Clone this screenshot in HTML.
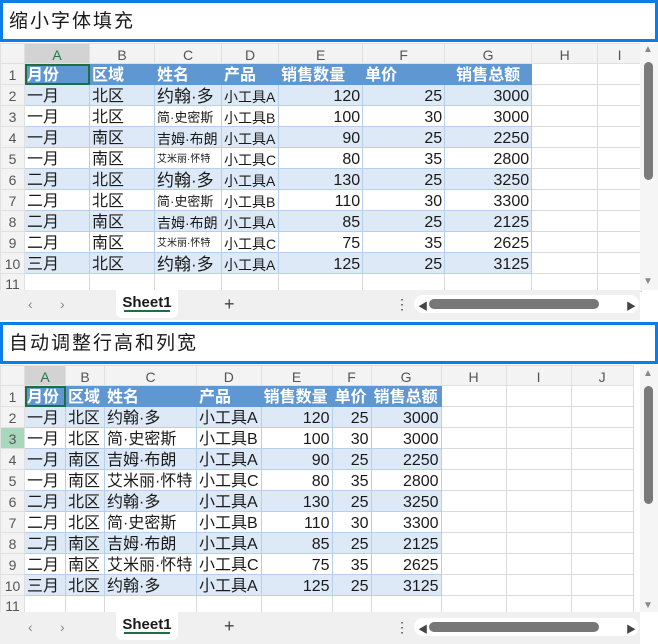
<!DOCTYPE html>
<html><head><meta charset="utf-8"><style>
*{box-sizing:border-box;margin:0;padding:0}
body{width:658px;height:644px;background:#fff;position:relative;overflow:hidden;font-family:"Liberation Sans","Noto Sans CJK SC",sans-serif;color:#1a1a1a}
.title{position:absolute;left:0;width:658px;height:42px;border:3px solid #0b7de6;font-size:19px;padding-left:6px;line-height:38px;letter-spacing:2px}
table{position:absolute;left:0;border-collapse:collapse;table-layout:fixed}
td{border:1px solid #dadada;white-space:nowrap;overflow:hidden;padding:3px 2px 0 2px;font-size:16px;line-height:1;vertical-align:middle}
tr.hd td{background:#f3f3f3;text-align:center;color:#555;font-size:14px;border-color:#e0e0e0}
td.rn{background:#f3f3f3;text-align:center;color:#555;font-size:14px;border-color:#e0e0e0;padding:2px 0 0 0}
tr.hd td.sel{background:#d3d3d3;color:#1f7a45}
tr.h1 td.d{background:#5f97d3;color:#fff;font-weight:bold;border-color:#5f97d3}
tr.b td.d{background:#dde9f6;border-color:#b6cfea}
tr.w td.d{background:#fff;border-color:#b6cfea}
td.r{text-align:right}
td.act{outline:2px solid #1e6e42;outline-offset:-2px}
.tabbar{position:absolute;left:0;width:640px;background:#f0f0f0}
.sheet{position:absolute;background:#fff;border-radius:0 0 6px 6px;font-weight:bold;font-size:15px;text-align:center}
.sheet i{position:absolute;left:8px;right:8px;bottom:6px;height:2px;background:#1e6e42}
.vs{position:absolute;left:640px;width:18px;background:#f5f5f5}
.thumb{position:absolute;left:644px;width:9px;background:#7a7a7a;border-radius:5px}
.hs{position:absolute;left:414px;width:225px;height:18px;background:#fff;border-radius:9px}
.hs b{position:absolute;left:15px;top:4px;width:170px;height:10px;background:#777;border-radius:5px}
.g{position:absolute;color:#888;font-size:14px}
</style></head><body>

<div class="title" style="top:0">缩小字体填充</div>

<table style="top:43px">
<colgroup><col style="width:24px"><col style="width:65px"><col style="width:65px"><col style="width:67px"><col style="width:55px"><col style="width:84px"><col style="width:82px"><col style="width:87px"><col style="width:66px"><col style="width:44px"></colgroup>
<tr class="hd" style="height:20px"><td></td><td class="sel">A</td><td>B</td><td>C</td><td>D</td><td>E</td><td>F</td><td>G</td><td>H</td><td>I</td></tr>
<tr class="h1" style="height:21px"><td class="rn">1</td><td class="d act">月份</td><td class="d">区域</td><td class="d">姓名</td><td class="d">产品</td><td class="d">销售数量</td><td class="d">单价</td><td class="d" style="text-align:center">销售总额</td><td></td><td></td></tr>
<tr class="b" style="height:21px"><td class="rn">2</td><td class="d">一月</td><td class="d">北区</td><td class="d" style="font-size:17px">约翰·多</td><td class="d" style="font-size:14px">小工具A</td><td class="d r">120</td><td class="d r">25</td><td class="d r">3000</td><td></td><td></td></tr>
<tr class="w" style="height:21px"><td class="rn">3</td><td class="d">一月</td><td class="d">北区</td><td class="d" style="font-size:13px">简·史密斯</td><td class="d" style="font-size:14px">小工具B</td><td class="d r">100</td><td class="d r">30</td><td class="d r">3000</td><td></td><td></td></tr>
<tr class="b" style="height:21px"><td class="rn">4</td><td class="d">一月</td><td class="d">南区</td><td class="d" style="font-size:14px">吉姆·布朗</td><td class="d" style="font-size:14px">小工具A</td><td class="d r">90</td><td class="d r">25</td><td class="d r">2250</td><td></td><td></td></tr>
<tr class="w" style="height:21px"><td class="rn">5</td><td class="d">一月</td><td class="d">南区</td><td class="d" style="font-size:10px">艾米丽·怀特</td><td class="d" style="font-size:14px">小工具C</td><td class="d r">80</td><td class="d r">35</td><td class="d r">2800</td><td></td><td></td></tr>
<tr class="b" style="height:21px"><td class="rn">6</td><td class="d">二月</td><td class="d">北区</td><td class="d" style="font-size:17px">约翰·多</td><td class="d" style="font-size:14px">小工具A</td><td class="d r">130</td><td class="d r">25</td><td class="d r">3250</td><td></td><td></td></tr>
<tr class="w" style="height:21px"><td class="rn">7</td><td class="d">二月</td><td class="d">北区</td><td class="d" style="font-size:13px">简·史密斯</td><td class="d" style="font-size:14px">小工具B</td><td class="d r">110</td><td class="d r">30</td><td class="d r">3300</td><td></td><td></td></tr>
<tr class="b" style="height:21px"><td class="rn">8</td><td class="d">二月</td><td class="d">南区</td><td class="d" style="font-size:14px">吉姆·布朗</td><td class="d" style="font-size:14px">小工具A</td><td class="d r">85</td><td class="d r">25</td><td class="d r">2125</td><td></td><td></td></tr>
<tr class="w" style="height:21px"><td class="rn">9</td><td class="d">二月</td><td class="d">南区</td><td class="d" style="font-size:10px">艾米丽·怀特</td><td class="d" style="font-size:14px">小工具C</td><td class="d r">75</td><td class="d r">35</td><td class="d r">2625</td><td></td><td></td></tr>
<tr class="b" style="height:21px"><td class="rn">10</td><td class="d">三月</td><td class="d">北区</td><td class="d" style="font-size:17px">约翰·多</td><td class="d" style="font-size:14px">小工具A</td><td class="d r">125</td><td class="d r">25</td><td class="d r">3125</td><td></td><td></td></tr>
<tr style="height:18px"><td class="rn">11</td><td></td><td></td><td></td><td></td><td></td><td></td><td></td><td></td><td></td></tr>
</table>
<div class="vs" style="top:43px;height:247px"></div>
<div class="g" style="left:643px;top:44px;font-size:10px">▲</div>
<div class="thumb" style="top:62px;height:118px"></div>
<div class="g" style="left:643px;top:276px;font-size:10px">▼</div>
<div class="tabbar" style="top:290px;height:30px"></div>
<div class="g" style="left:28px;top:296px">‹</div><div class="g" style="left:60px;top:296px">›</div>
<div class="sheet" style="left:116px;top:290px;width:62px;height:28px;line-height:26px">Sheet1<i></i></div>
<div class="g" style="left:224px;top:294px;font-size:18px;color:#444">+</div>
<div class="g" style="left:395px;top:296px;color:#444">⋮</div>
<div class="hs" style="top:295px"><b></b></div>
<div class="g" style="left:418px;top:298px;font-size:10px;color:#444">◀</div>
<div class="g" style="left:626px;top:298px;font-size:10px;color:#444">▶</div>

<div class="title" style="top:322px">自动调整行高和列宽</div>

<table style="top:365px">
<colgroup><col style="width:24px"><col style="width:41px"><col style="width:39px"><col style="width:92px"><col style="width:63px"><col style="width:71px"><col style="width:39px"><col style="width:70px"><col style="width:65px"><col style="width:65px"><col style="width:62px"></colgroup>
<tr class="hd" style="height:20px"><td></td><td class="sel">A</td><td>B</td><td>C</td><td>D</td><td>E</td><td>F</td><td>G</td><td>H</td><td>I</td><td>J</td></tr>
<tr class="h1" style="height:21px"><td class="rn">1</td><td class="d act">月份</td><td class="d">区域</td><td class="d">姓名</td><td class="d">产品</td><td class="d">销售数量</td><td class="d">单价</td><td class="d">销售总额</td><td></td><td></td><td></td></tr>
<tr class="b" style="height:21px"><td class="rn">2</td><td class="d">一月</td><td class="d">北区</td><td class="d">约翰·多</td><td class="d">小工具A</td><td class="d r">120</td><td class="d r">25</td><td class="d r">3000</td><td></td><td></td><td></td></tr>
<tr class="w" style="height:21px"><td class="rn" style="background:#a7d8bb">3</td><td class="d">一月</td><td class="d">北区</td><td class="d">简·史密斯</td><td class="d">小工具B</td><td class="d r">100</td><td class="d r">30</td><td class="d r">3000</td><td></td><td></td><td></td></tr>
<tr class="b" style="height:21px"><td class="rn">4</td><td class="d">一月</td><td class="d">南区</td><td class="d">吉姆·布朗</td><td class="d">小工具A</td><td class="d r">90</td><td class="d r">25</td><td class="d r">2250</td><td></td><td></td><td></td></tr>
<tr class="w" style="height:21px"><td class="rn">5</td><td class="d">一月</td><td class="d">南区</td><td class="d">艾米丽·怀特</td><td class="d">小工具C</td><td class="d r">80</td><td class="d r">35</td><td class="d r">2800</td><td></td><td></td><td></td></tr>
<tr class="b" style="height:21px"><td class="rn">6</td><td class="d">二月</td><td class="d">北区</td><td class="d">约翰·多</td><td class="d">小工具A</td><td class="d r">130</td><td class="d r">25</td><td class="d r">3250</td><td></td><td></td><td></td></tr>
<tr class="w" style="height:21px"><td class="rn">7</td><td class="d">二月</td><td class="d">北区</td><td class="d">简·史密斯</td><td class="d">小工具B</td><td class="d r">110</td><td class="d r">30</td><td class="d r">3300</td><td></td><td></td><td></td></tr>
<tr class="b" style="height:21px"><td class="rn">8</td><td class="d">二月</td><td class="d">南区</td><td class="d">吉姆·布朗</td><td class="d">小工具A</td><td class="d r">85</td><td class="d r">25</td><td class="d r">2125</td><td></td><td></td><td></td></tr>
<tr class="w" style="height:21px"><td class="rn">9</td><td class="d">二月</td><td class="d">南区</td><td class="d">艾米丽·怀特</td><td class="d">小工具C</td><td class="d r">75</td><td class="d r">35</td><td class="d r">2625</td><td></td><td></td><td></td></tr>
<tr class="b" style="height:21px"><td class="rn">10</td><td class="d">三月</td><td class="d">北区</td><td class="d">约翰·多</td><td class="d">小工具A</td><td class="d r">125</td><td class="d r">25</td><td class="d r">3125</td><td></td><td></td><td></td></tr>
<tr style="height:18px"><td class="rn">11</td><td></td><td></td><td></td><td></td><td></td><td></td><td></td><td></td><td></td><td></td></tr>
</table>
<div class="vs" style="top:365px;height:247px"></div>
<div class="g" style="left:643px;top:368px;font-size:10px">▲</div>
<div class="thumb" style="top:386px;height:118px"></div>
<div class="g" style="left:643px;top:600px;font-size:10px">▼</div>
<div class="tabbar" style="top:612px;height:32px"></div>
<div class="g" style="left:28px;top:619px">‹</div><div class="g" style="left:60px;top:619px">›</div>
<div class="sheet" style="left:116px;top:612px;width:62px;height:28px;line-height:26px">Sheet1<i></i></div>
<div class="g" style="left:224px;top:616px;font-size:18px;color:#444">+</div>
<div class="g" style="left:395px;top:619px;color:#444">⋮</div>
<div class="hs" style="top:618px"><b></b></div>
<div class="g" style="left:418px;top:621px;font-size:10px;color:#444">◀</div>
<div class="g" style="left:626px;top:621px;font-size:10px;color:#444">▶</div>
</body></html>
